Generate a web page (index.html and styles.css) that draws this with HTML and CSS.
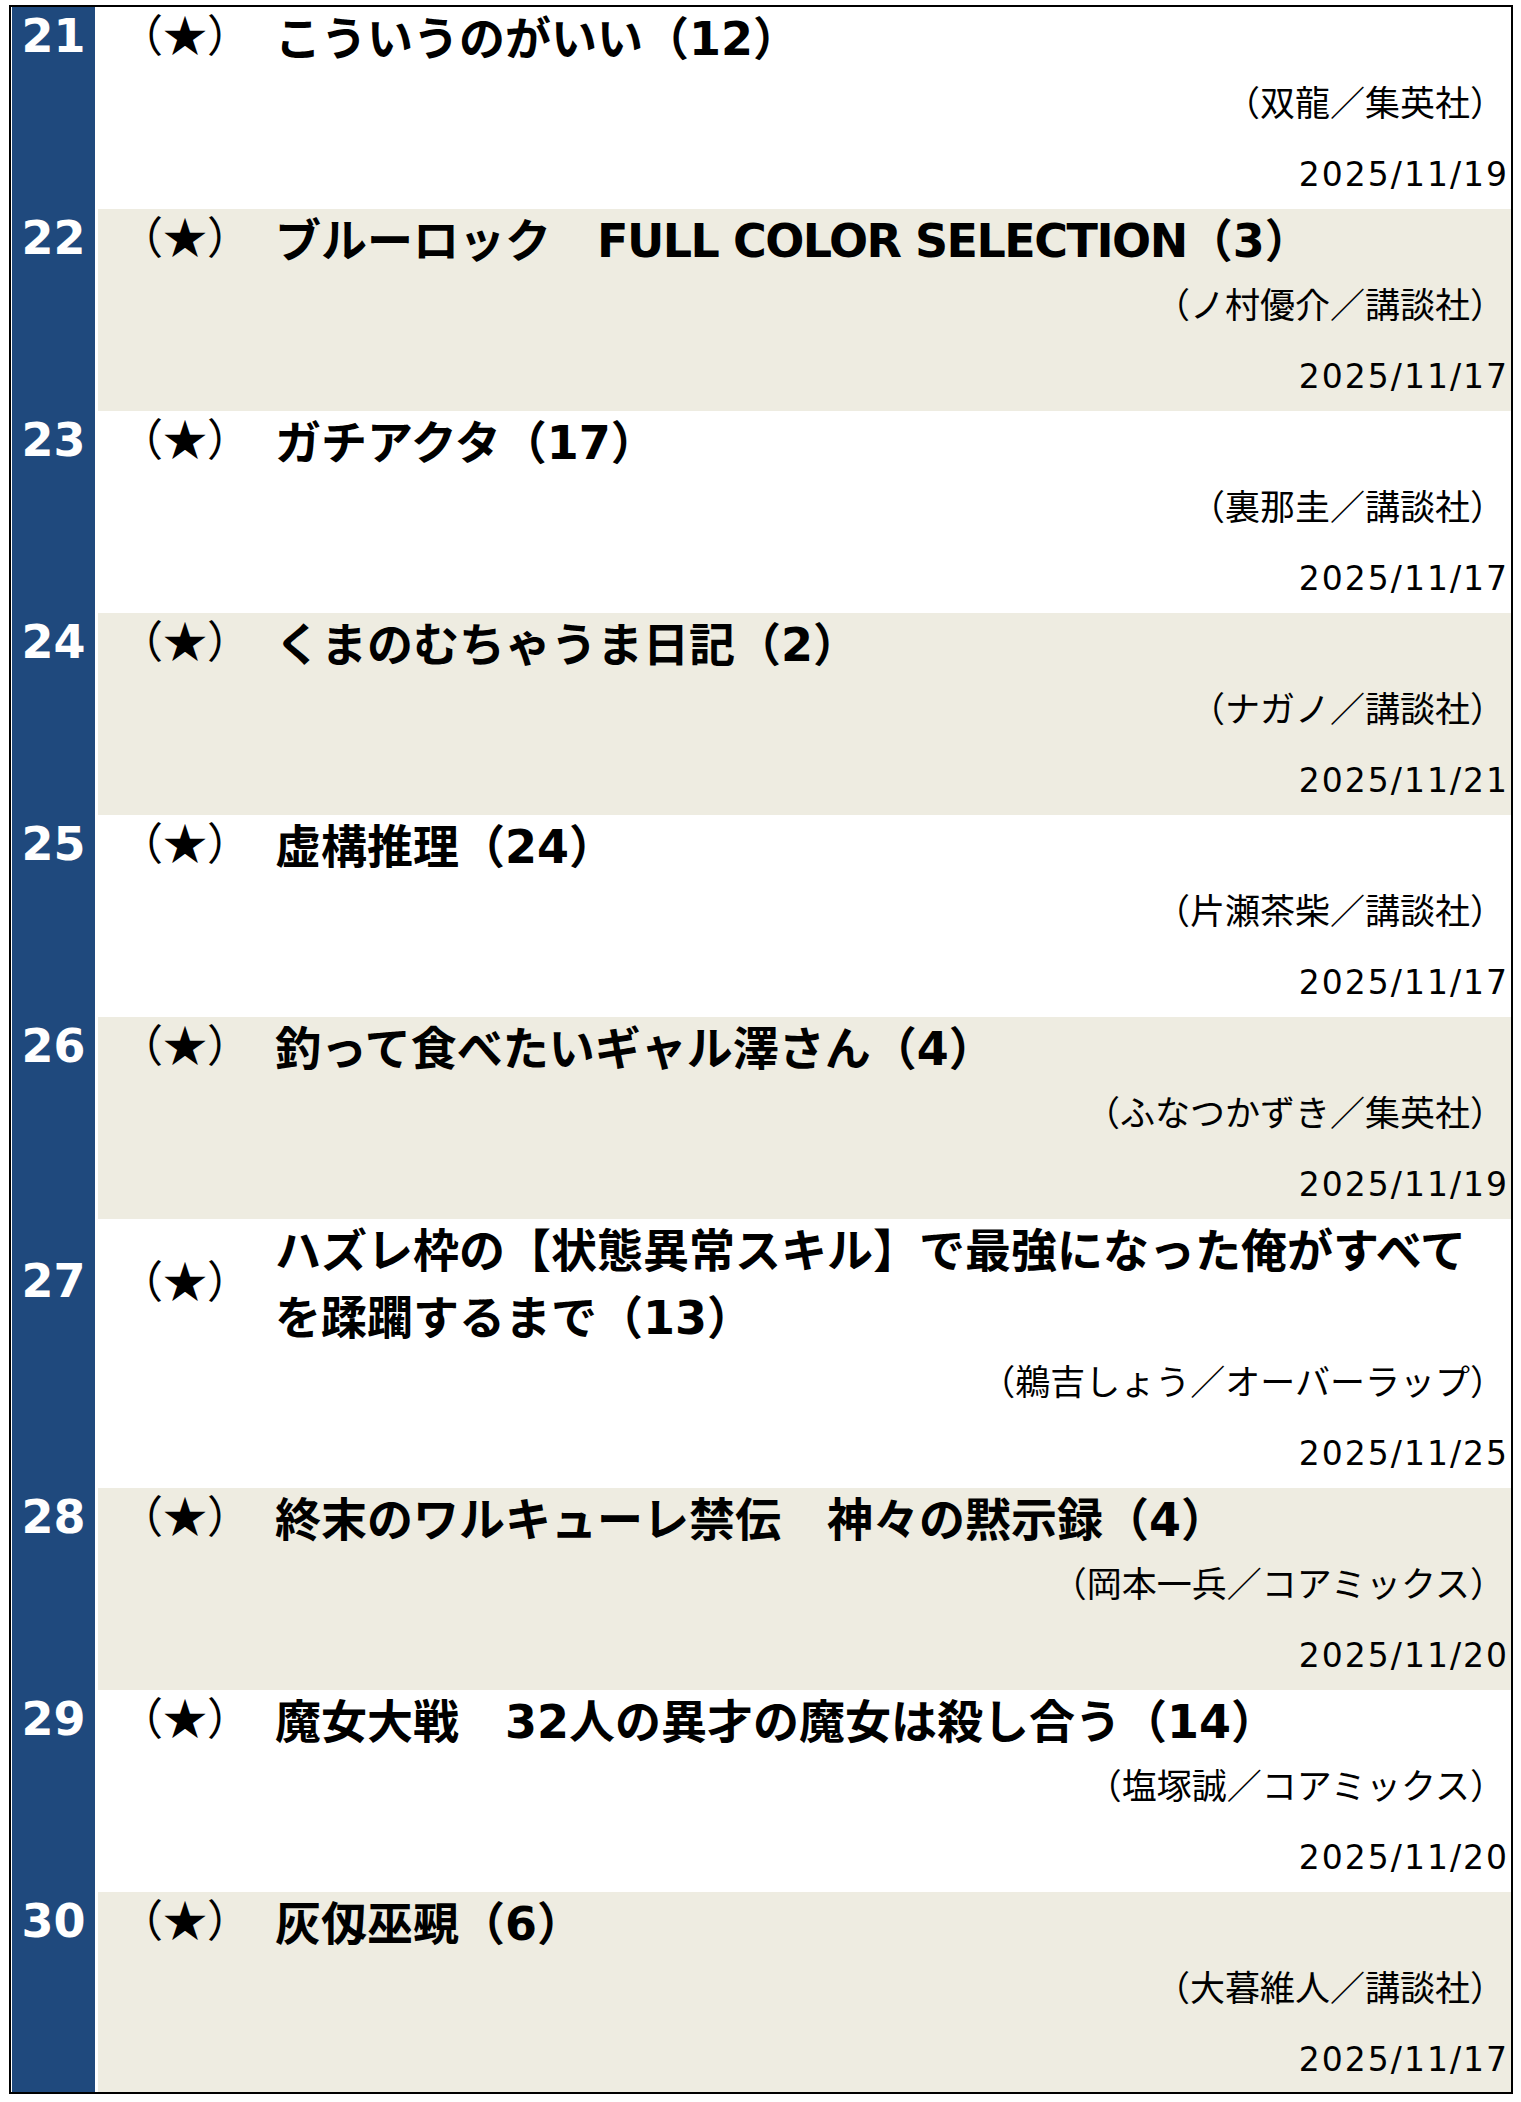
FILE: index.html
```html
<!DOCTYPE html>
<html lang="ja">
<head>
<meta charset="utf-8">
<title>ランキング 21〜30</title>
<link rel="stylesheet" href="styles.css">
</head>
<body>
<div class="ranking">
  <div class="item">
    <div class="rank">21</div>
    <div class="star">（★）</div>
    <div class="title">こういうのがいい（12）</div>
    <div class="author">（双龍／集英社）</div>
    <div class="date">2025/11/19</div>
  </div>
  <div class="item">
    <div class="rank">22</div>
    <div class="star">（★）</div>
    <div class="title">ブルーロック　<span class="latin">FULL COLOR SELECTION</span>（3）</div>
    <div class="author">（ノ村優介／講談社）</div>
    <div class="date">2025/11/17</div>
  </div>
  <div class="item">
    <div class="rank">23</div>
    <div class="star">（★）</div>
    <div class="title">ガチアクタ（17）</div>
    <div class="author">（裏那圭／講談社）</div>
    <div class="date">2025/11/17</div>
  </div>
  <div class="item">
    <div class="rank">24</div>
    <div class="star">（★）</div>
    <div class="title">くまのむちゃうま日記（2）</div>
    <div class="author">（ナガノ／講談社）</div>
    <div class="date">2025/11/21</div>
  </div>
  <div class="item">
    <div class="rank">25</div>
    <div class="star">（★）</div>
    <div class="title">虚構推理（24）</div>
    <div class="author">（片瀬茶柴／講談社）</div>
    <div class="date">2025/11/17</div>
  </div>
  <div class="item">
    <div class="rank">26</div>
    <div class="star">（★）</div>
    <div class="title">釣って食べたいギャル澤さん（4）</div>
    <div class="author">（ふなつかずき／集英社）</div>
    <div class="date">2025/11/19</div>
  </div>
  <div class="item">
    <div class="rank">27</div>
    <div class="star">（★）</div>
    <div class="title">ハズレ枠の【状態異常スキル】で最強になった俺がすべてを蹂躙するまで（13）</div>
    <div class="author">（鵜吉しょう／オーバーラップ）</div>
    <div class="date">2025/11/25</div>
  </div>
  <div class="item">
    <div class="rank">28</div>
    <div class="star">（★）</div>
    <div class="title">終末のワルキューレ禁伝　神々の黙示録（4）</div>
    <div class="author">（岡本一兵／コアミックス）</div>
    <div class="date">2025/11/20</div>
  </div>
  <div class="item">
    <div class="rank">29</div>
    <div class="star">（★）</div>
    <div class="title">魔女大戦　32人の異才の魔女は殺し合う（14）</div>
    <div class="author">（塩塚誠／コアミックス）</div>
    <div class="date">2025/11/20</div>
  </div>
  <div class="item">
    <div class="rank">30</div>
    <div class="star">（★）</div>
    <div class="title">灰仭巫覡（6）</div>
    <div class="author">（大暮維人／講談社）</div>
    <div class="date">2025/11/17</div>
  </div>
</div>
</body>
</html>
```

FILE: styles.css
```css
html, body {
  margin: 0;
  padding: 0;
  background: #ffffff;
}

body {
  padding: 5px 0 0 9px;
  font-family: "DejaVu Sans", "Noto Sans CJK JP", sans-serif;
  color: #000000;
}

.ranking {
  width: 1504px;
  box-sizing: border-box;
  border: 2px solid #000000;
  padding-left: 1px;
  background: #ffffff;
}

.item {
  display: grid;
  grid-template-columns: 83px 3px 177px 1fr;
  grid-template-rows: auto auto auto;
  padding-bottom: 9px;
  background: linear-gradient(to right, #1f497d 0, #1f497d 83px, #ffffff 83px, #ffffff 86px, #ffffff 86px);
}

.item:nth-child(even) {
  background: linear-gradient(to right, #1f497d 0, #1f497d 83px, #ffffff 83px, #ffffff 86px, #eeece1 86px);
}

.item:last-child {
  padding-bottom: 7px;
}

.rank {
  grid-column: 1;
  grid-row: 1;
  align-self: center;
  justify-self: center;
  margin-top: -9px;
  color: #ffffff;
  font-family: "DejaVu Sans", sans-serif;
  font-weight: bold;
  font-size: 46px;
  line-height: 56px;
}

.star {
  grid-column: 3;
  grid-row: 1;
  align-self: center;
  margin-top: -14px;
  padding-left: 21px;
  font-family: "Noto Sans CJK JP", sans-serif;
  font-size: 44px;
  line-height: 50px;
  white-space: nowrap;
}

.title {
  grid-column: 4;
  grid-row: 1;
  margin-top: -1px;
  padding-right: 30px;
  font-weight: bold;
  font-size: 46px;
  line-height: 67px;
}

.latin {
  letter-spacing: -1.5px;
}

.author {
  grid-column: 3 / 5;
  grid-row: 2;
  text-align: right;
  padding-right: 6px;
  font-size: 35px;
  line-height: 62px;
}

.date {
  grid-column: 3 / 5;
  grid-row: 3;
  text-align: right;
  margin-top: 15px;
  padding-right: 2px;
  font-family: "DejaVu Sans", sans-serif;
  font-size: 33px;
  line-height: 50px;
  letter-spacing: 2px;
}
```
